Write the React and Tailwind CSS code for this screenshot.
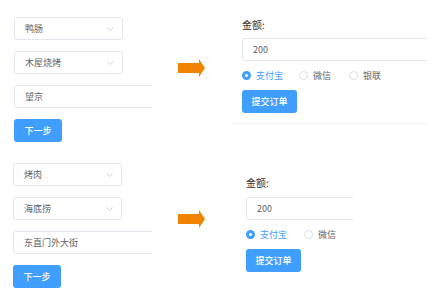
const font = { fontFamily: '"Noto Sans CJK SC", "Liberation Sans", sans-serif' };

function Chevron() {
  return (
    <svg width="7" height="4" viewBox="0 0 7 4" className="shrink-0">
      <path d="M0.5 0.5 L3.5 3.3 L6.5 0.5" fill="none" stroke="#c0c4cc" strokeWidth="0.8" />
    </svg>
  );
}

function Select({ text }) {
  return (
    <div className="flex h-[23px] w-[109px] items-center justify-between rounded-[3px] border border-[#e4e7ed] bg-white pl-[10px] pr-[8px] text-[9px] text-[#606266]">
      <span>{text}</span>
      <Chevron />
    </div>
  );
}

function Input({ text, width }) {
  return (
    <div
      className="flex h-[23px] shrink-0 items-center rounded-[3px] border border-[#e4e7ed] bg-white pl-[10px] text-[9px] text-[#606266]"
      style={{ width }}
    >
      {text}
    </div>
  );
}

function Button({ text, w }) {
  return (
    <div
      className="flex h-[23px] items-center justify-center rounded-[3px] bg-[#409eff] text-[9px] font-medium text-white"
      style={{ width: w }}
    >
      {text}
    </div>
  );
}

function Arrow() {
  return (
    <svg width="27" height="18" viewBox="0 0 27 18">
      <polygon points="0,4 21,4 21,0 27,9 21,18 21,14 0,14" fill="#f08300" />
    </svg>
  );
}

function Radio({ label, checked }) {
  return (
    <div className="flex items-center gap-[5px]">
      {checked ? (
        <div className="flex h-[9px] w-[9px] items-center justify-center rounded-full bg-[#409eff]">
          <div className="h-[3px] w-[3px] rounded-full bg-white" />
        </div>
      ) : (
        <div className="h-[9px] w-[9px] rounded-full border border-[#dcdfe6] bg-white" />
      )}
      <span className={`text-[9px] leading-[13px] ${checked ? 'text-[#409eff]' : 'text-[#606266]'}`}>{label}</span>
    </div>
  );
}

function LeftCol({ a, b, c, pl, pt }) {
  return (
    <div className="w-[152px] shrink-0 overflow-hidden" style={{ paddingLeft: pl, paddingTop: pt }}>
      <div className="flex flex-col gap-[11px]">
        <Select text={a} />
        <Select text={b} />
        <Input text={c} width={200} />
        <Button text="下一步" w={48} />
      </div>
    </div>
  );
}

export default function App() {
  return (
    <div className="h-[306px] w-[445px] overflow-hidden bg-white" style={font}>
      {/* top row */}
      <div className="flex h-[150px]">
        <LeftCol a="鸭肠" b="木屋烧烤" c="望京" pl={14} pt={17} />
        <div className="ml-[26px] mt-[59px] shrink-0">
          <Arrow />
        </div>
        <div className="ml-[26px] h-[124px] w-[196px] shrink-0 overflow-hidden border-b border-[#f3f4f6] pl-[11px] pt-[18px]">
          <div className="text-[10px] leading-[14px] text-[#303133]">金额:</div>
          <div className="mt-[6px]">
            <Input text="200" width={200} />
          </div>
          <div className="mt-[8px] flex h-[13px] items-center">
            <div className="w-[57px]"><Radio label="支付宝" checked /></div>
            <div className="w-[50px]"><Radio label="微信" /></div>
            <Radio label="银联" />
          </div>
          <div className="mt-[8px]">
            <Button text="提交订单" w={55} />
          </div>
        </div>
      </div>
      {/* bottom row */}
      <div className="flex h-[156px]">
        <LeftCol a="烤肉" b="海底捞" c="东直门外大街" pl={13} pt={13} />
        <div className="ml-[26px] mt-[60px] shrink-0">
          <Arrow />
        </div>
        <div className="ml-[30px] w-[118px] shrink-0 overflow-hidden pl-[11px] pt-[26px]">
          <div className="text-[10px] leading-[14px] text-[#303133]">金额:</div>
          <div className="mt-[7px]">
            <Input text="200" width={150} />
          </div>
          <div className="mt-[8px] flex h-[13px] items-center">
            <div className="w-[58px]"><Radio label="支付宝" checked /></div>
            <Radio label="微信" />
          </div>
          <div className="mt-[8px]">
            <Button text="提交订单" w={55} />
          </div>
        </div>
      </div>
    </div>
  );
}
